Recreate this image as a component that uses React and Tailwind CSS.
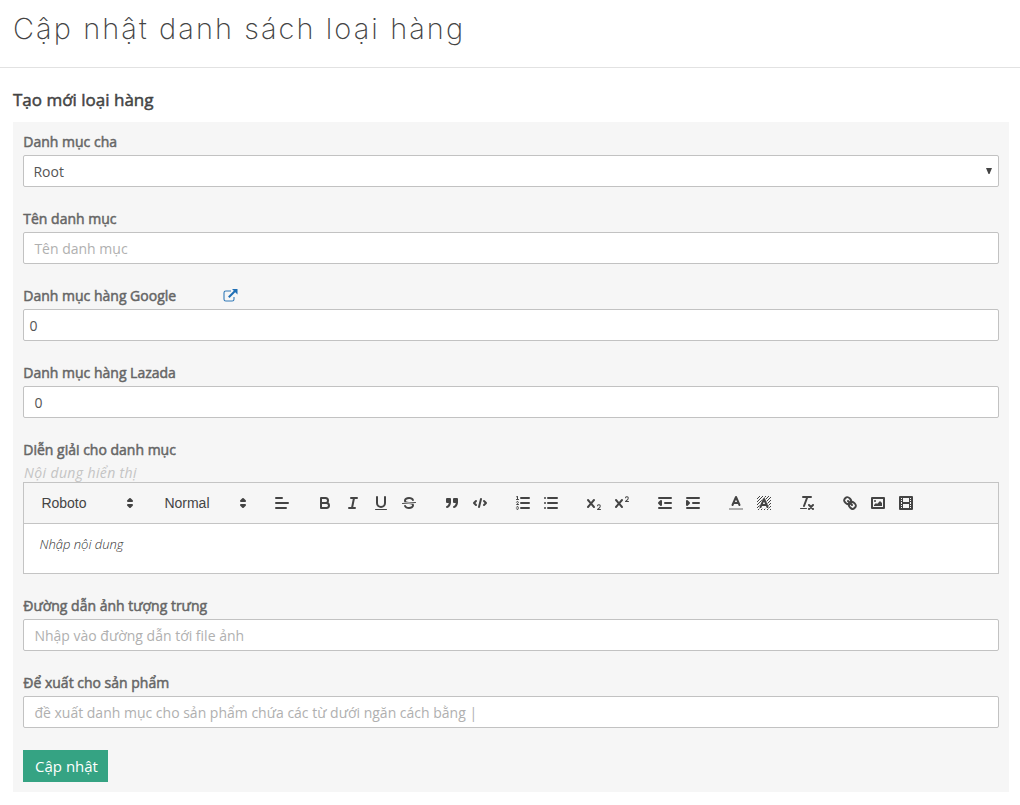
import React from "react";

const S = { fill: "none", stroke: "#444", strokeWidth: 2, strokeLinecap: "round", strokeLinejoin: "round" };
const THIN = { ...S, strokeWidth: 1 };
const SF = { ...S, fill: "#444" };
const F = { fill: "#444" };
const TWO =
  "M15.5,15H13.861a3.858,3.858,0,0,0,1.914-2.975,1.8,1.8,0,0,0-1.6-1.751A1.921,1.921,0,0,0,12.021,11.7a0.50013,0.50013,0,1,0,.957.291h0a0.914,0.914,0,0,1,1.053-.725,0.81,0.81,0,0,1,.744.762c0,1.076-1.16971,1.86982-1.93971,2.43082A1.45639,1.45639,0,0,0,12,15.5a0.5,0.5,0,0,0,.5.5h3A0.5,0.5,0,0,0,15.5,15Z";
const EX =
  "M9.65,5.241a1,1,0,0,0-1.409.108L6,7.964,3.759,5.349A1,1,0,0,0,2.192,6.59178Q2.21541,6.6213,2.241,6.649L4.684,9.5,2.241,12.35A1,1,0,0,0,3.71,13.70722q0.02557-.02768.049-0.05722L6,11.036,8.241,13.65a1,1,0,1,0,1.567-1.24277Q9.78459,12.3777,9.759,12.35L7.316,9.5,9.759,6.651A1,1,0,0,0,9.65,5.241Z";

const icons = {
  align: (
    <g {...S}><path d="M3 9H15M3 14H13M3 4H9" /></g>
  ),
  bold: (
    <g {...S}><path d="M5,4H9.5A2.5,2.5,0,0,1,9.5,9H5Z" /><path d="M5,9h5.5A2.5,2.5,0,0,1,10.5,14H5Z" /></g>
  ),
  italic: <path {...S} d="M7 4H13M5 14H11M8 14L10 4" />,
  underline: (
    <g><path {...S} d="M5,3V9a4.012,4.012,0,0,0,4,4H9a4.012,4.012,0,0,0,4-4V3" /><rect {...F} x="3" y="15" width="12" height="1" rx=".5" /></g>
  ),
  strike: (
    <g>
      <path {...THIN} d="M15.5 8.5L2.5 9.5" />
      <path {...F} d="M9.007,8C6.542,7.791,6,7.519,6,6.5,6,5.792,7.283,5,9,5c1.571,0,2.765.679,2.969,1.309a1,1,0,0,0,1.9-.617C13.356,4.106,11.354,3,9,3,6.2,3,4,4.538,4,6.5a3.2,3.2,0,0,0,.5,1.843Z" />
      <path {...F} d="M8.984,10C11.457,10.208,12,10.479,12,11.5c0,0.708-1.283,1.5-3,1.5-1.571,0-2.765-.679-2.969-1.309a1,1,0,1,0-1.9.617C4.644,13.894,6.646,15,9,15c2.8,0,5-1.538,5-3.5a3.2,3.2,0,0,0-.5-1.843Z" />
    </g>
  ),
  quote: (
    <g {...SF}>
      <rect x="4" y="5" width="3" height="3" /><rect x="11" y="5" width="3" height="3" />
      <path d="M7,8c0,4.031-3,5-3,5" /><path d="M14,8c0,4.031-3,5-3,5" />
    </g>
  ),
  code: <path {...S} d="M5 7L3 9L5 11M13 7L15 9L13 11M10 5L8 13" />,
  ordered: (
    <g>
      <path {...S} d="M7 4H15M7 9H15M7 14H15" />
      <path {...THIN} d="M2.5 5.5H4.5" />
      <path {...F} d="M3.5,6A0.5,0.5,0,0,1,3,5.5V3.085l-0.276.138A0.5,0.5,0,0,1,2.053,3c-0.124-.247-0.023-0.324.224-0.447l1-.5A0.5,0.5,0,0,1,4,2.5v3A0.5,0.5,0,0,1,3.5,6Z" />
      <path {...THIN} d="M4.5,10.5h-2c0-.234,1.85-1.076,1.85-2.234A0.959,0.959,0,0,0,2.5,8.156" />
      <path {...THIN} d="M2.5,14.846a0.959,0.959,0,0,0,1.85-.109A0.7,0.7,0,0,0,3.75,14a0.688,0.688,0,0,0,.6-0.736,0.959,0.959,0,0,0-1.85-.109" />
    </g>
  ),
  bullet: <path {...S} d="M6 4H15M6 9H15M6 14H15M3 4H3M3 9H3M3 14H3" />,
  sub: <g {...F}><path d={TWO} /><path d={EX} /></g>,
  sup: <g {...F}><path d={TWO} transform="translate(0 -8)" /><path d={EX} /></g>,
  outdent: <g {...SF}><path d="M3 14H15M3 4H15M9 9H15" /><path d="M5 7V11L3 9Z" /></g>,
  indent: <g {...SF}><path d="M3 14H15M3 4H15M9 9H15" /><path d="M3 7V11L5 9Z" /></g>,
  color: (
    <g {...S}><path opacity=".4" strokeLinecap="butt" d="M2 15H16" /><path d="M5.5 11L9 3L12.5 11M11.63 9H6.38" /></g>
  ),
  background: (
    <g>
      <defs>
        <pattern id="hatch" width="3" height="3" patternUnits="userSpaceOnUse">
          <path fill="#444" d="M0 0h1v1h-1zM2 1h1v1h-1zM1 2h1v1h-1z" />
        </pattern>
      </defs>
      <rect x="2" y="2" width="14" height="14" fill="url(#hatch)" />
      <path d="M5 13.5L9 4.5L13 13.5Z" fill="#f6f6f6" stroke="#f6f6f6" strokeWidth="2.4" strokeLinejoin="round" />
      <path {...S} d="M5.5 13L9 5L12.5 13M11.63 11H6.38" />
    </g>
  ),
  clean: (
    <g><path {...S} d="M5 3H13M6 12L9.35 3M11 11L15 15M15 11L11 15" /><rect {...F} x="2" y="14" width="7" height="1" rx=".5" /></g>
  ),
  link: (
    <g {...S}>
      <path d="M7 7L11 11" />
      <path d="M8.9,4.577a3.476,3.476,0,0,1,.36,4.679A3.476,3.476,0,0,1,4.577,8.9C3.185,7.5,2.035,6.4,4.217,4.217S7.5,3.185,8.9,4.577Z" />
      <path d="M13.423,9.1a3.476,3.476,0,0,0-4.679-.36,3.476,3.476,0,0,0,.36,4.679c1.392,1.392,2.5,2.542,4.679.36S14.815,10.5,13.423,9.1Z" />
    </g>
  ),
  image: (
    <g><rect {...S} x="3" y="4" width="12" height="10" /><circle {...F} cx="6" cy="7" r="1" /><path {...F} d="M5 12V11L7 9L8 10L11 7L13 9V12Z" /></g>
  ),
  video: (
    <g>
      <rect {...S} x="3" y="3" width="12" height="12" />
      <path {...F} d="M5 3h1v12h-1zM12 3h1v12h-1zM5 8h8v2h-8zM3 5h3v1h-3zM3 7h3v1h-3zM3 10h3v1h-3zM3 12h3v1h-3zM12 5h3v1h-3zM12 7h3v1h-3zM12 10h3v1h-3zM12 12h3v1h-3z" />
    </g>
  ),
};

const groups = [
  ["align"],
  ["bold", "italic", "underline", "strike"],
  ["quote", "code"],
  ["ordered", "bullet"],
  ["sub", "sup"],
  ["outdent", "indent"],
  ["color", "background"],
  ["clean"],
  ["link", "image", "video"],
];

function Tool({ name }) {
  return (
    <button className="flex h-6 w-7 items-center justify-center">
      <svg viewBox="0 0 18 18" className="size-[18px]">{icons[name]}</svg>
    </button>
  );
}

function Picker({ label, className }) {
  return (
    <div className={`flex h-6 items-center justify-between pl-[9.4px] pr-px font-['Liberation_Sans',sans-serif] text-sm text-[#444] ${className}`}>
      <span className="font-medium">{label}</span>
      <svg viewBox="0 0 18 18" className="size-[18px]">
        <g {...SF}><path d="M7 11L9 13L11 11Z" /><path d="M7 7L9 5L11 7Z" /></g>
      </svg>
    </div>
  );
}

function Label({ children }) {
  return (
    <span className="whitespace-nowrap pl-[0.3px] text-sm leading-5 text-[#666] [-webkit-text-stroke:0.5px_#666]">{children}</span>
  );
}

const BOX = "flex h-8 items-center rounded-[2px] border border-[#c2c2c2] bg-white pt-0.5 text-sm";

function Placeholder({ children }) {
  return <div className={`${BOX} pl-[10.4px] text-[#b0b0b0]`}>{children}</div>;
}

function Field({ label, extra, children }) {
  return (
    <div>
      <div className="flex h-[23px] items-start"><Label>{label}</Label>{extra}</div>
      {children}
    </div>
  );
}

const ExternalLink = () => (
  <svg viewBox="0 0 15 13" className="ml-[46.5px] mt-[3px] h-[13px] w-[15px]">
    <path d="M8 2H2.8Q1 2 1 3.8V10.2Q1 12 2.8 12H9.2Q11 12 11 10.2V8" fill="none" stroke="#337ab7" strokeWidth="1.1" />
    <path d="M5.8 8.2L12 2" fill="none" stroke="#1f6fb5" strokeWidth="2" />
    <path d="M9 0H14.5V5.5Z" fill="#1f6fb5" />
  </svg>
);

export default function App() {
  return (
    <main className="h-[805px] w-full overflow-hidden bg-white font-['Open_Sans',sans-serif]">
      <header className="flex h-[68px] items-start border-b border-[#e2e2e2] pl-[13px] pt-2">
        <h1 className="whitespace-nowrap font-['Inter',sans-serif] text-[29px] font-extralight leading-[42px] tracking-[2.06px] text-[#444]">
          Cập nhật danh sách loại hàng
        </h1>
      </header>
      <h2 className="flex h-[54px] items-start pl-[13px] pt-5 text-[17px] leading-6 text-[#444] [-webkit-text-stroke:0.5px_#444]">
        <span>Tạo mới loại hàng</span>
      </h2>
      <section className="ml-[13px] flex w-[996px] flex-col gap-[22px] bg-[#f6f6f6] p-2.5">
        <Field label="Danh mục cha">
          <div className={`${BOX} justify-between pl-[9.4px] pr-[6px] text-[#555]`}>
            <span>Root</span>
            <svg viewBox="0 0 6 6" className="mb-0.5 size-1.5"><path d="M0 0H6L3.5 6H2.5Z" fill="#444" /></svg>
          </div>
        </Field>
        <Field label="Tên danh mục">
          <Placeholder>Tên danh mục</Placeholder>
        </Field>
        <Field label="Danh mục hàng Google" extra={<ExternalLink />}>
          <div className={`${BOX} pl-[5.4px] text-[#555]`}>0</div>
        </Field>
        <Field label="Danh mục hàng Lazada">
          <div className={`${BOX} pl-[10.4px] text-[#555]`}>0</div>
        </Field>
        <Field label="Diễn giải cho danh mục">
          <div className="h-[19px] pl-px text-sm italic leading-5 tracking-[0.38px] text-[#c4c4c4]">Nội dung hiển thị</div>
          <div className="h-[92px] border border-[#c4c4c4] bg-white">
            <div className="flex h-[41px] items-center gap-[15px] border-b border-[#c4c4c4] bg-[#f6f6f6] px-2">
              <Picker label="Roboto" className="w-[108px]" />
              <Picker label="Normal" className="w-[98px]" />
              {groups.map((group) => (
                <div key={group[0]} className="flex">{group.map((n) => <Tool key={n} name={n} />)}</div>
              ))}
            </div>
            <p className="pl-[15.5px] pt-[10px] text-[13px] font-light italic leading-5 text-[#333]">Nhập nội dung</p>
          </div>
        </Field>
        <Field label="Đường dẫn ảnh tượng trưng">
          <Placeholder>Nhập vào đường dẫn tới file ảnh</Placeholder>
        </Field>
        <Field label="Để xuất cho sản phẩm">
          <Placeholder>đề xuất danh mục cho sản phẩm chứa các từ dưới ngăn cách bằng |</Placeholder>
        </Field>
        <button className="flex h-8 w-[85px] items-center justify-center bg-[#35a383] pl-0.5 text-[15px] text-white">Cập nhật</button>
      </section>
    </main>
  );
}
